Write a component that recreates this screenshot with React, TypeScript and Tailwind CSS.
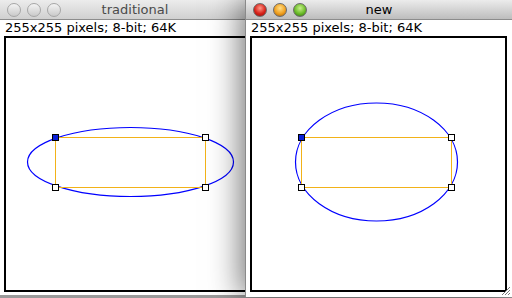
import React from 'react';

type Pt = [number, number];

function Handle({ at, active = false }: { at: Pt; active?: boolean }) {
  return (
    <rect
      x={at[0] - 3}
      y={at[1] - 3}
      width={6}
      height={6}
      fill={active ? '#0a1fd8' : '#ffffff'}
      stroke="#000000"
      strokeWidth={1}
      shapeRendering="crispEdges"
    />
  );
}

function Canvas({ rx, ry }: { rx: number; ry: number }) {
  const corners: Pt[] = [
    [49.5, 99.5],
    [199.5, 99.5],
    [49.5, 149.5],
    [199.5, 149.5],
  ];
  return (
    <div className="h-[256px] w-[257px] border-2 border-black bg-white">
      <svg width={253} height={252} viewBox="0 0 253 252" className="block">
        <ellipse cx={124.5} cy={124} rx={rx} ry={ry} fill="none" stroke="#0000ff" strokeWidth={1.2} />
        <rect x={49.5} y={99.5} width={150} height={50} fill="none" stroke="#f2b218" strokeWidth={1} shapeRendering="crispEdges" />
        {corners.map((c, i) => (
          <Handle key={i} at={c} active={i === 0} />
        ))}
      </svg>
    </div>
  );
}

const activeLights = [
  'bg-[radial-gradient(circle_at_50%_35%,#ff9a8a,#d8231a_55%,#8e0b06)]',
  'bg-[radial-gradient(circle_at_50%_35%,#ffe08a,#f0a020_55%,#a05a05)]',
  'bg-[radial-gradient(circle_at_50%_35%,#c8f08a,#6cbc2a_55%,#2f6d0b)]',
];

function Lights({ active }: { active: boolean }) {
  return (
    <div className="flex items-center gap-[6px] pl-[7px]">
      {[0, 1, 2].map((i) => (
        <span
          key={i}
          className={`h-[14px] w-[14px] rounded-full border ${
            active ? `border-[#6a6a6a] ${activeLights[i]}` : 'border-[#a6a6a6] bg-[linear-gradient(#f4f4f4,#c9c9c9)]'
          }`}
        />
      ))}
    </div>
  );
}

function Window({ title, active, rx, ry }: { title: string; active: boolean; rx: number; ry: number }) {
  return (
    <div className="flex h-full flex-col bg-white">
      <div
        className={`relative flex h-[20px] shrink-0 items-center border-b border-[#8c8c8c] ${
          active ? 'bg-[linear-gradient(#ececec,#bdbdbd)]' : 'bg-[linear-gradient(#ececec,#d0d0d0)]'
        }`}
      >
        <Lights active={active} />
        <div
          className={`absolute inset-0 flex items-center justify-center text-[13px] ${active ? 'text-black' : 'text-[#4a4a4a]'}`}
        >
          {title}
        </div>
      </div>
      <div className="h-[16px] pl-[5px] text-[13px] leading-[15px] text-black">255x255 pixels; 8-bit; 64K</div>
      <div className="pl-[4px]">
        <Canvas rx={rx} ry={ry} />
      </div>
    </div>
  );
}

export default function App() {
  return (
    <div className="relative h-[298px] w-[512px] overflow-hidden bg-[#9a9a9a] font-['DejaVu_Sans',sans-serif]">
      <div className="absolute left-0 top-0 h-[295px] w-[270px]">
        <Window title="traditional" active={false} rx={103} ry={34.5} />
      </div>
      <div className="absolute left-[245px] top-0 h-[297px] w-[267px] border-l border-[#8a8a8a] shadow-[-4px_0_30px_rgba(0,0,0,0.55)]">
        <Window title="new" active rx={81} ry={59} />
        <svg className="absolute bottom-[1px] right-[1px]" width={12} height={12} viewBox="0 0 12 12">
          <path d="M11 3 L3 11 M11 6 L6 11 M11 9 L9 11" stroke="#7a7a7a" strokeWidth={1} />
          <path d="M11 4 L4 11 M11 7 L7 11" stroke="#ffffff" strokeWidth={1} />
        </svg>
      </div>
    </div>
  );
}
